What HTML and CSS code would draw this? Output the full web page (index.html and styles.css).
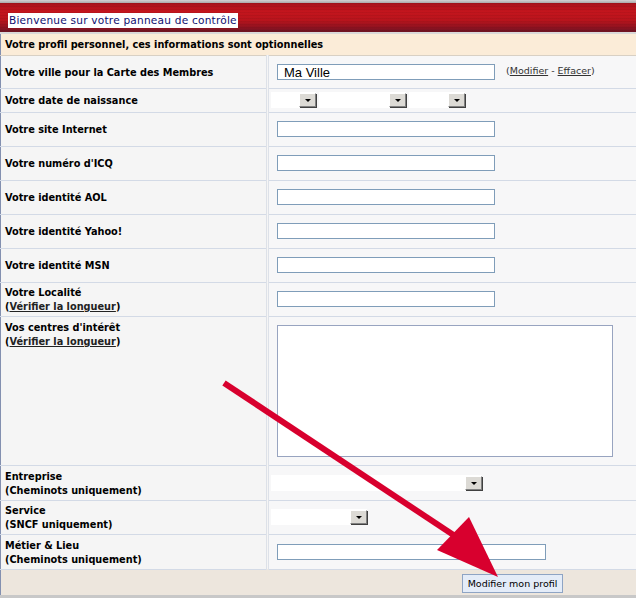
FILE: index.html
```html
<!DOCTYPE html>
<html lang="fr">
<head>
    <meta charset="UTF-8">
    <title>Panneau de contrôle</title>
    <link rel="stylesheet" href="styles.css">
</head>
<body>
    <div class="page">
        <div class="top-line"></div>
        <div class="header">
            <span class="title">Bienvenue sur votre panneau de contrôle</span>
        </div>
        <div class="sub-line"></div>

        <table class="profile">
            <tr class="section">
                <td colspan="2">Votre profil personnel, ces informations sont optionnelles</td>
            </tr>
            <tr class="h33">
                <td class="label">Votre ville pour la Carte des Membres</td>
                <td class="field">
                    <input type="text" class="txt city" value="Ma Ville">
                    <span class="links">(<a href="#">Modifier</a> - <a href="#">Effacer</a>)</span>
                </td>
            </tr>
            <tr class="h24">
                <td class="label">Votre date de naissance</td>
                <td class="field sel-cell">
                    <span class="sel w30"><span class="arrow"></span></span>
                    <span class="sel w70"><span class="arrow"></span></span>
                    <span class="sel w40"><span class="arrow"></span></span>
                </td>
            </tr>
            <tr class="h34">
                <td class="label">Votre site Internet</td>
                <td class="field"><input type="text" class="txt"></td>
            </tr>
            <tr class="h34">
                <td class="label">Votre numéro d'ICQ</td>
                <td class="field"><input type="text" class="txt"></td>
            </tr>
            <tr class="h34">
                <td class="label">Votre identité AOL</td>
                <td class="field"><input type="text" class="txt"></td>
            </tr>
            <tr class="h34">
                <td class="label">Votre identité Yahoo!</td>
                <td class="field"><input type="text" class="txt"></td>
            </tr>
            <tr class="h34">
                <td class="label">Votre identité MSN</td>
                <td class="field"><input type="text" class="txt"></td>
            </tr>
            <tr class="h34">
                <td class="label">Votre Localité<br>(<a href="#">Vérifier la longueur</a>)</td>
                <td class="field"><input type="text" class="txt"></td>
            </tr>
            <tr class="h149">
                <td class="label top">Vos centres d'intérêt<br>(<a href="#">Vérifier la longueur</a>)</td>
                <td class="field top"><textarea class="area"></textarea></td>
            </tr>
            <tr class="h35">
                <td class="label">Entreprise<br>(Cheminots uniquement)</td>
                <td class="field sel-cell"><span class="sel w193"><span class="arrow"></span></span></td>
            </tr>
            <tr class="h34">
                <td class="label">Service<br>(SNCF uniquement)</td>
                <td class="field sel-cell"><span class="sel w79"><span class="arrow"></span></span></td>
            </tr>
            <tr class="h35">
                <td class="label">Métier &amp; Lieu<br>(Cheminots uniquement)</td>
                <td class="field"><input type="text" class="txt wide"></td>
            </tr>
            <tr class="footer">
                <td colspan="2"><button class="submit">Modifier mon profil</button></td>
            </tr>
        </table>

        <svg class="pointer" viewBox="0 0 636 600" width="636" height="600">
            <line x1="224" y1="383" x2="455" y2="536" stroke="#d8002e" stroke-width="6"/>
            <polygon points="437,550 469,517 498,577" fill="#d8002e"/>
        </svg>
    </div>
</body>
</html>
```

FILE: styles.css
```css
* {
  box-sizing: border-box;
}

body {
  margin: 0;
  background: #fff;
  font-family: "DejaVu Sans", Verdana, sans-serif;
}

.page {
  position: relative;
  width: 636px;
  height: 600px;
  overflow: hidden;
}

.top-line {
  height: 3px;
  background: linear-gradient(#d4d4d4, #a9a9a9);
}

.header {
  height: 29px;
  padding: 6px 0 0 8px;
  background:
    repeating-linear-gradient(rgba(0, 0, 0, 0.06) 0 1px, rgba(255, 255, 255, 0) 1px 3px),
    linear-gradient(#a6141c 0%, #c4151d 30%, #b8141c 60%, #8e1220 85%, #6c1424 100%);
}

.title {
  display: inline-block;
  background: #fff;
  color: #101070;
  font-size: 10.6px;
  letter-spacing: 0.2px;
  line-height: 15px;
  padding: 0 1px;
}

.sub-line {
  height: 2px;
  background: #d9d9d9;
}

.profile {
  width: 636px;
  border-collapse: collapse;
  border-left: 1px solid #8390b0;
  font-size: 9.75px;
  font-weight: bold;
  color: #000;
}

.profile td {
  padding: 0;
  border-bottom: 1px solid #d3dae6;
}

.section td {
  height: 21px;
  padding-left: 4px;
  background: #fbecd8;
  border-bottom: 1px solid #d8d0c4;
}

.label {
  width: 267px;
  padding: 2px 0 0 4px !important;
  background: #f5f5f5;
  border-right: 3px double #dde1e8;
  line-height: 14px;
  vertical-align: middle;
}

.field {
  background: #f7f7f8;
  padding-left: 8px !important;
  vertical-align: middle;
}

.top {
  vertical-align: top;
}

.label.top {
  padding-top: 4px !important;
}

.field.top {
  padding-top: 8px !important;
}

.label a {
  color: #222;
}

.h24 td { height: 24px; }
.h33 td { height: 33px; }
.h34 td { height: 34px; }
.h35 td { height: 35px; }
.h149 td { height: 149px; }

.txt {
  display: block;
  float: left;
  width: 218px;
  height: 16px;
  margin: 0;
  border: 1px solid #7f9db9;
  background: #fff;
  font-family: "Liberation Sans", Arial, sans-serif;
  font-size: 13px;
  padding: 0 6px;
}

.city {
  margin-top: 1px;
}

.wide {
  width: 269px;
}

.links {
  display: inline-block;
  margin: 2px 0 0 11px;
  font-weight: normal;
  font-size: 9.5px;
  color: #333;
}

.links a {
  color: #333;
}

.area {
  display: block;
  width: 336px;
  height: 132px;
  margin: 0;
  border: 1px solid #98a4c0;
  background: #fff;
  resize: none;
}

.sel-cell {
  padding-left: 2px !important;
  font-size: 0;
}

.sel {
  display: inline-flex;
  justify-content: flex-end;
  align-items: center;
  height: 16px;
  background: #fff;
  margin-right: 3px;
}

.w30 { width: 45px; }
.w70 { width: 87px; }
.w40 { width: 56px; }
.w193 { width: 211px; }
.w79 { width: 96px; }

.arrow {
  position: relative;
  width: 17px;
  height: 14px;
  background: #dcdad5;
  border: 1px solid;
  border-color: #fff #808080 #808080 #fff;
  box-shadow: 1px 1px 0 #404040;
}

.arrow::after {
  content: "";
  position: absolute;
  left: 5px;
  top: 5px;
  border-left: 3px solid transparent;
  border-right: 3px solid transparent;
  border-top: 3px solid #000;
}

.footer td {
  height: 27px;
  background: #ede6dd;
  text-align: right;
  border-bottom: 3px solid #c8c8c8;
  padding: 3px 73px 0 0;
}

.submit {
  height: 19px;
  width: 101px;
  padding: 0;
  border: 1px solid #8ea4c4;
  background: #e4ecf8;
  font-family: "DejaVu Sans", Verdana, sans-serif;
  font-size: 9.5px;
  color: #000;
}

.pointer {
  position: absolute;
  left: 0;
  top: 0;
  pointer-events: none;
}
```
